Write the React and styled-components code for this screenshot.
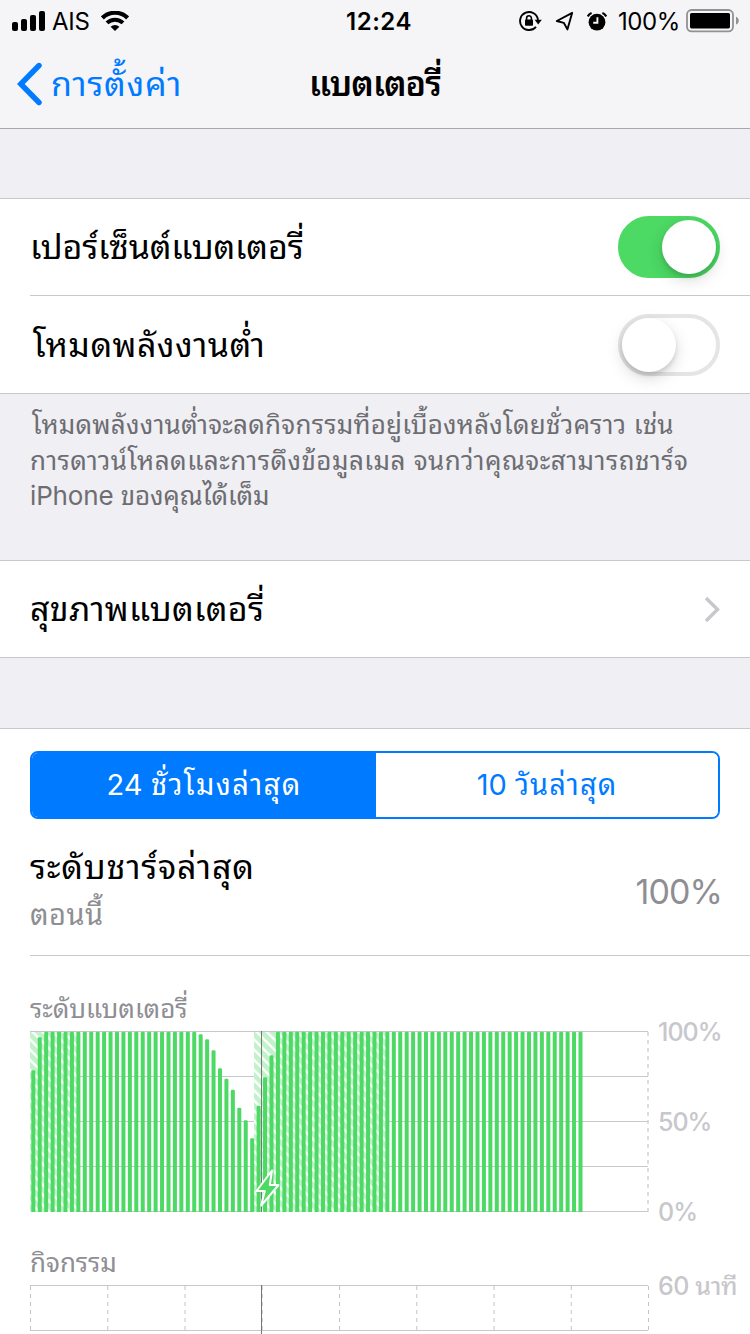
import React from 'react';
import styled, { createGlobalStyle, css } from 'styled-components';

const BAR_STEP = 618 / 96;

// battery level per 15 minute slot, as the y offset of the top of the bar
const levels = Array.from({ length: 86 }, () => 0.5);
[39, 6].forEach((top, i) => {
    levels[i] = top;
});
[3, 8, 19, 37, 47.5, 58.5, 76.5, 89, 107, 74.5, 46, 24].forEach((top, i) => {
    levels[26 + i] = top;
});

const columns = Array.from({ length: 9 }, (_, i) => i * 77.25 + 0.5);

const SignalIcon = () => (
    <svg width="34" height="20" viewBox="0 0 34 20">
        <rect x="0" y="11" width="6" height="9" rx="2" />
        <rect x="9" y="8" width="6" height="12" rx="2" />
        <rect x="18" y="4" width="6" height="16" rx="2" />
        <rect x="27" y="0" width="6" height="20" rx="2" />
    </svg>
);

const WifiIcon = () => (
    <svg width="28" height="20" viewBox="0 0 28 20" fill="none" stroke="#000">
        <path d="M1.4 6.9a18 18 0 0 1 25.2 0" strokeWidth="4.2" />
        <path d="M6 11.9a11.5 11.5 0 0 1 16 0" strokeWidth="4" />
        <path d="M9.6 15.8a6.2 6.2 0 0 1 8.8 0L14 20z" fill="#000" stroke="none" />
    </svg>
);

const RotationLockIcon = () => (
    <svg width="23" height="20" viewBox="0 0 23 20">
        <path d="M19 8.8A9 9 0 1 0 17 15.8" fill="none" stroke="#000" strokeWidth="1.9" />
        <path d="M15.6 8.8h7.2l-3.6 4.6z" />
        <rect x="6" y="8.6" width="8" height="6.2" rx="0.8" />
        <path d="M7.6 9V7.2a2.4 2.4 0 0 1 4.8 0V9" fill="none" stroke="#000" strokeWidth="1.6" />
    </svg>
);

const LocationIcon = () => (
    <svg width="19" height="20" viewBox="0 0 19 20">
        <path d="M17.2 1.8L1.8 10l7 1.8 3.6 6.6z" fill="none" stroke="#000" strokeWidth="1.9" strokeLinejoin="round" />
    </svg>
);

const AlarmIcon = () => (
    <svg width="20" height="19" viewBox="0 0 20 19">
        <circle cx="10" cy="10.2" r="8.4" />
        <path d="M0.8 4.4A7 7 0 0 1 4.6 1M19.2 4.4A7 7 0 0 0 15.4 1" fill="none" stroke="#000" strokeWidth="2.2" />
        <path d="M10.4 5.2v5.6H6.2" fill="none" stroke="#f5f5f7" strokeWidth="1.9" />
    </svg>
);

const BatteryIcon = () => (
    <svg width="54" height="24" viewBox="0 0 54 24">
        <rect x="1" y="1" width="46" height="21.4" rx="4.6" fill="none" stroke="#929294" strokeWidth="1.8" />
        <rect x="4" y="4" width="40" height="15.4" rx="1.6" />
        <path d="M50 7.8c1.6.6 2.8 2.1 2.8 3.9s-1.2 3.3-2.8 3.9z" fill="#929294" />
    </svg>
);

const BackIcon = () => (
    <svg width="26" height="44" viewBox="0 0 26 44">
        <path d="M23 3.5L4.8 22 23 40.5" fill="none" stroke="#007aff" strokeWidth="5.4" strokeLinecap="round" />
    </svg>
);

const ChevronIcon = () => (
    <svg width="16" height="27" viewBox="0 0 16 27">
        <path d="M2 2l11.5 11.5L2 25" fill="none" stroke="#c7c7cc" strokeWidth="3.4" />
    </svg>
);

const LevelChart = () => (
    <svg width="619" height="182" viewBox="0 0 619 182">
        <defs>
            <pattern id="charging" width="7.2" height="10" patternUnits="userSpaceOnUse" patternTransform="rotate(-45)">
                <rect width="7.2" height="10" fill="#c1f2c9" />
                <rect width="2.4" height="10" fill="#fff" />
            </pattern>
        </defs>
        <path d="M0 .5h618M0 45.5h618M0 90.5h618M0 135.5h618M0 180.5h618" stroke="#c8c8ca" />
        <path d="M.5 1v180M618 1v180" stroke="#d0d0d2" strokeWidth="1.4" strokeDasharray="4 4" />
        <rect x="0" y="1" width="48" height="180" fill="url(#charging)" />
        <rect x="224" y="1" width="134" height="180" fill="url(#charging)" />
        <path d="M231.5 0v181" stroke="#77777a" />
        {levels.map((top, i) => (
            <path
                key={i}
                d={`M${i * BAR_STEP + 1.3} 181V${top + 1.6}q0-1.3 1.3-1.3h1.4q1.3 0 1.3 1.3V181z`}
                fill="#4cd964"
            />
        ))}
        <path d="M242 139.5L226.5 160h8.3l-3.6 14.5L248.5 154h-8.7z" fill="#4cd964" stroke="#fff" strokeWidth="2" strokeLinejoin="round" />
    </svg>
);

const ActivityChart = () => (
    <svg width="619" height="49" viewBox="0 0 619 49">
        <path d="M0 .5h618M0 45.5h618" stroke="#c8c8ca" />
        {columns.map(x => (
            <path key={x} d={`M${x} 1v48`} stroke="#c4c4c6" strokeDasharray="4 4" />
        ))}
        <path d="M231.5 0v49" stroke="#77777a" />
    </svg>
);

const App = () => (
    <Screen>
        <GlobalStyle />
        <Header>
            <StatusBar>
                <StatusGroup>
                    <SignalIcon />
                    <Carrier>AIS</Carrier>
                    <WifiIcon />
                </StatusGroup>
                <Clock>12:24</Clock>
                <StatusGroup right>
                    <StatusIcons>
                        <RotationLockIcon />
                        <LocationIcon />
                        <AlarmIcon />
                    </StatusIcons>
                    <Percent>100%</Percent>
                    <BatteryIcon />
                </StatusGroup>
            </StatusBar>
            <NavBar>
                <Back>
                    <BackIcon />
                    การตั้งค่า
                </Back>
                <Title>แบตเตอรี่</Title>
            </NavBar>
        </Header>

        <Group top={69}>
            <Row>
                <Label tracking={-0.15}>เปอร์เซ็นต์แบตเตอรี่</Label>
                <Switch on>
                    <Knob />
                </Switch>
            </Row>
            <Divider />
            <Row tall>
                <Label tracking={0.45} indent={3}>โหมดพลังงานต่ำ</Label>
                <Switch>
                    <Knob />
                </Switch>
            </Row>
        </Group>
        <Footnote>
            <FootnoteLine tracking={0.22} indent={2}>โหมดพลังงานต่ำจะลดกิจกรรมที่อยู่เบื้องหลังโดยชั่วคราว เช่น</FootnoteLine>
            <FootnoteLine tracking={0.46}>การดาวน์โหลดและการดึงข้อมูลเมล จนกว่าคุณจะสามารถชาร์จ</FootnoteLine>
            <FootnoteLine tracking={-0.15}>iPhone ของคุณได้เต็ม</FootnoteLine>
        </Footnote>

        <Group>
            <Row>
                <Label tracking={0.3}>สุขภาพแบตเตอรี่</Label>
                <ChevronIcon />
            </Row>
        </Group>

        <Group top={70}>
            <Segments>
                <Segment active>
                    <Digits>24</Digits> ชั่วโมงล่าสุด
                </Segment>
                <Segment>
                    <Digits>10</Digits> วันล่าสุด
                </Segment>
            </Segments>
            <LastCharge>
                <div>
                    <ChargeTitle>ระดับชาร์จล่าสุด</ChargeTitle>
                    <ChargeTime>ตอนนี้</ChargeTime>
                </div>
                <ChargeValue>100%</ChargeValue>
            </LastCharge>
            <Divider />
            <ChartTitle top={36}>ระดับแบตเตอรี่</ChartTitle>
            <ChartRow>
                <LevelChart />
                <Axis>
                    <span>100%</span>
                    <span>50%</span>
                    <span>0%</span>
                </Axis>
            </ChartRow>
            <ChartTitle top={33}>กิจกรรม</ChartTitle>
            <ChartRow>
                <ActivityChart />
                <Axis minutes>
                    <span>60 นาที</span>
                </Axis>
            </ChartRow>
        </Group>
    </Screen>
);

const GlobalStyle = createGlobalStyle`
    * {
        box-sizing: border-box;
    }

    body {
        margin: 0;
        overflow: hidden;
        background: #efeff4;
    }

    svg {
        display: block;
        flex-shrink: 0;
    }
`;

const Screen = styled.main`
    width: 750px;
    height: 1334px;
    overflow: hidden;
    background: #efeff4;
    color: #000;
    font-family: Inter, 'Noto Sans Thai Looped', Loma, Garuda, Umpush, sans-serif;
    white-space: nowrap;
`;

const Header = styled.header`
    height: 129px;
    background: #f5f5f7;
    border-bottom: 1px solid #a7a7ab;
`;

const StatusBar = styled.div`
    height: 40px;
    display: grid;
    grid-template-columns: 1fr auto 1fr;
    align-items: center;
    padding: 0 10px 0 12px;
    font-size: 24px;
    line-height: 40px;
`;

const StatusGroup = styled.div.withConfig({ shouldForwardProp: prop => prop !== 'right' })`
    display: flex;
    align-items: center;
    ${props => props.right && 'justify-content: flex-end'};
`;

const StatusIcons = styled.div`
    display: flex;
    align-items: center;
    gap: 13px;
`;

const Carrier = styled.span`
    margin: 0 11px 0 6px;
    padding-top: 2px;
    letter-spacing: -0.3px;
`;

const Clock = styled.span`
    padding: 2px 0 0 6px;
    font-weight: 600;
    letter-spacing: 0.5px;
`;

const Percent = styled.span`
    margin: 0 6px 0 11px;
    padding-top: 2px;
    letter-spacing: -0.4px;
`;

const NavBar = styled.nav`
    height: 88px;
    display: grid;
    grid-template-columns: 1fr auto 1fr;
    align-items: center;
    padding: 0 16px;
    font-size: 34px;
    line-height: 88px;
`;

const Back = styled.a`
    display: flex;
    align-items: center;
    gap: 9px;
    color: #007aff;
    letter-spacing: 0.75px;
`;

const Title = styled.span`
    font-weight: 600;
    letter-spacing: -0.9px;
`;

const Group = styled.section.withConfig({ shouldForwardProp: prop => prop !== 'top' })`
    margin-top: ${props => props.top || 0}px;
    background: #fff;
    border: solid #c8c7cc;
    border-width: 1px 0;
`;

const Row = styled.div.withConfig({ shouldForwardProp: prop => prop !== 'tall' })`
    height: ${props => (props.tall ? 97 : 96)}px;
    display: flex;
    align-items: center;
    justify-content: space-between;
    padding: 0 30px;
`;

const Label = styled.span.withConfig({ shouldForwardProp: prop => !['tracking', 'indent'].includes(prop) })`
    padding-left: ${props => props.indent || 0}px;
    font-size: 34px;
    line-height: 96px;
    letter-spacing: ${props => props.tracking || 0}px;
`;

const Divider = styled.hr`
    height: 1px;
    margin: 0 0 0 30px;
    border: 0;
    background: #c8c7cc;
`;

const switchOn = css`
    justify-content: flex-end;
    border-color: #4cd964;
    background: #4cd964;
`;

const Switch = styled.div.withConfig({ shouldForwardProp: prop => prop !== 'on' })`
    width: 102px;
    height: 62px;
    display: flex;
    border: 4px solid #e5e5e5;
    border-radius: 31px;
    ${props => props.on && switchOn};
`;

const Knob = styled.div`
    width: 54px;
    height: 54px;
    border-radius: 50%;
    background: #fff;
    box-shadow: 0 6px 16px rgba(0, 0, 0, 0.15), 0 3px 4px rgba(0, 0, 0, 0.12);
`;

const Footnote = styled.p`
    height: 166px;
    margin: 0;
    padding: 13px 30px 0;
    display: flex;
    flex-direction: column;
    align-items: flex-start;
    color: #6d6d72;
    font-size: 26px;
    line-height: 35.5px;
`;

const FootnoteLine = styled.span.withConfig({ shouldForwardProp: prop => !['tracking', 'indent'].includes(prop) })`
    padding-left: ${props => props.indent || 0}px;
    letter-spacing: ${props => props.tracking || 0}px;
`;

const Segments = styled.div`
    height: 68px;
    display: flex;
    margin: 22px 30px 0;
    border: 2px solid #007aff;
    border-radius: 8px;
    overflow: hidden;
`;

const Segment = styled.div.withConfig({ shouldForwardProp: prop => prop !== 'active' })`
    width: ${props => (props.active ? 344 : 342)}px;
    text-align: center;
    font-size: 29px;
    line-height: 64px;
    letter-spacing: ${props => (props.active ? 1.4 : 1.1)}px;
    color: ${props => (props.active ? '#fff' : '#007aff')};
    background: ${props => (props.active ? '#007aff' : '#fff')};
`;

const Digits = styled.span`
    margin-right: -1px;
    letter-spacing: 0;
`;

const LastCharge = styled.div`
    height: 136px;
    display: flex;
    align-items: center;
    justify-content: space-between;
    padding: 8px 28px 0 30px;
`;

const ChargeTitle = styled.div`
    font-size: 34px;
    line-height: 48px;
    letter-spacing: 0.75px;
`;

const ChargeTime = styled.div`
    color: #8e8e93;
    font-size: 29px;
    line-height: 48px;
    letter-spacing: 0.5px;
`;

const ChargeValue = styled.span`
    color: #8e8e93;
    font-size: 34px;
    letter-spacing: -0.9px;
`;

const ChartTitle = styled.div.withConfig({ shouldForwardProp: prop => prop !== 'top' })`
    height: ${props => props.top + 39}px;
    padding: ${props => props.top}px 30px 0;
    color: #8e8e93;
    font-size: 26px;
    line-height: 34px;
    letter-spacing: -0.05px;
`;

const ChartRow = styled.div`
    display: flex;
    padding-left: 30px;
`;

const Axis = styled.div.withConfig({ shouldForwardProp: prop => prop !== 'minutes' })`
    display: flex;
    flex-direction: column;
    gap: 60px;
    margin: -14px 0 -14px 9px;
    color: #c7c7cc;
    font-size: 25px;
    font-weight: 500;
    line-height: 30px;
    letter-spacing: ${props => (props.minutes ? -0.4 : -1)}px;
`;

export default App;
